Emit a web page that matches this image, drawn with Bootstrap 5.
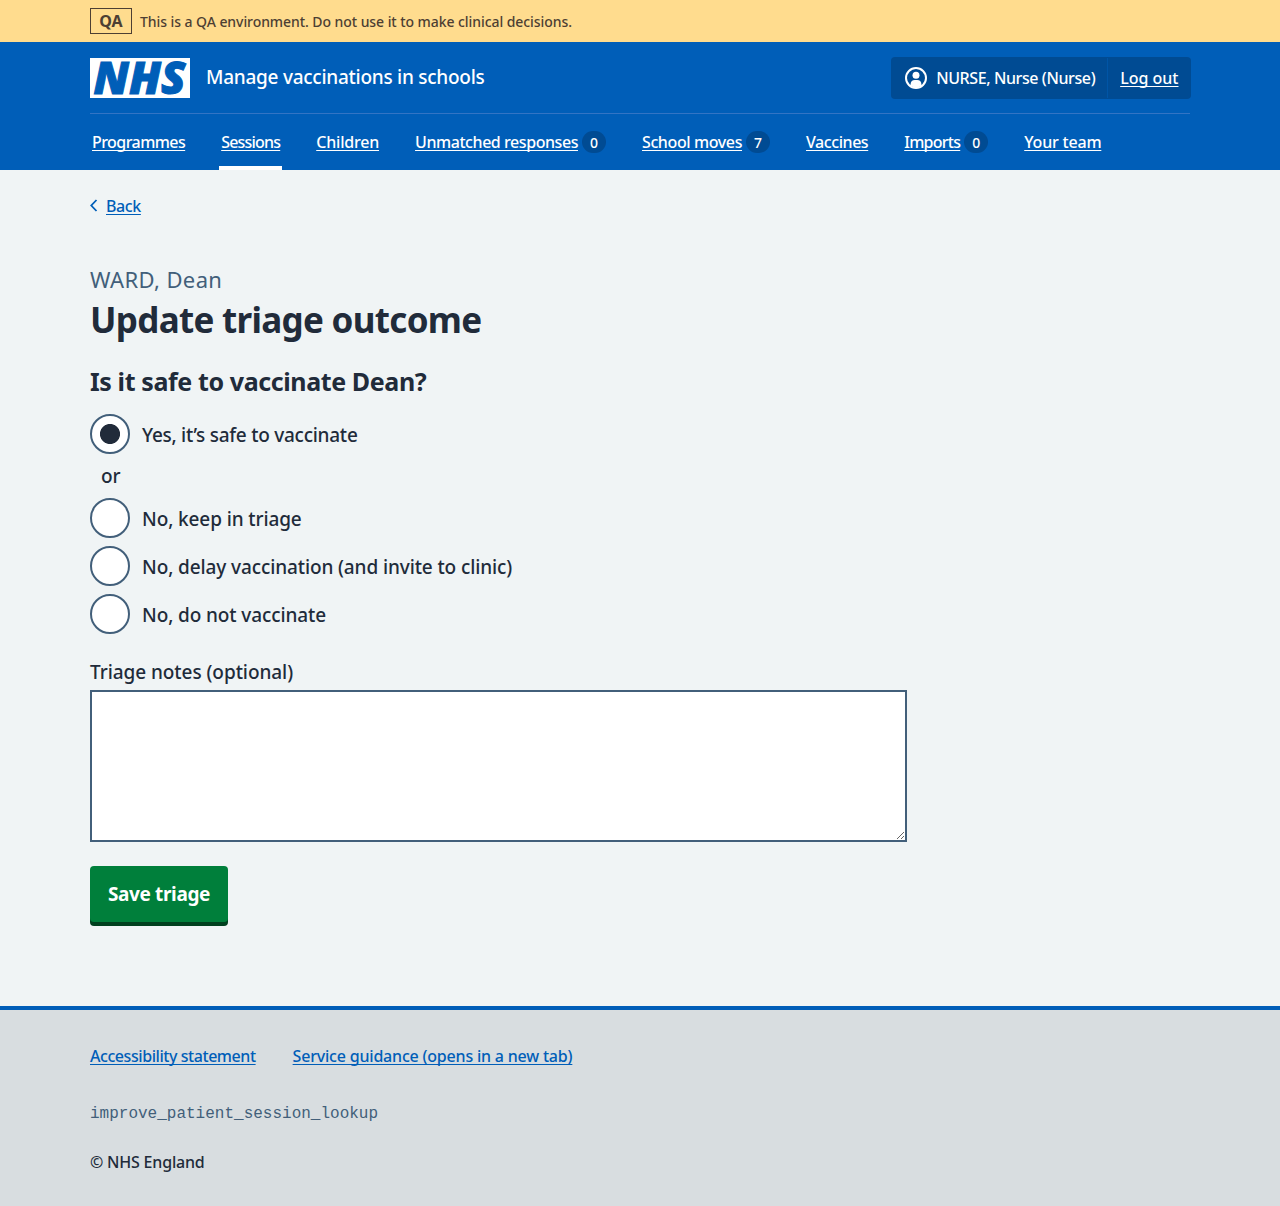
<!DOCTYPE html>
<html lang="en">
<head>
<meta charset="utf-8">
<meta name="viewport" content="width=device-width, initial-scale=1">
<title>Update triage outcome – Manage vaccinations in schools</title>
<link href="https://cdn.jsdelivr.net/npm/bootstrap@5.3.0/dist/css/bootstrap.min.css" rel="stylesheet">
<script src="https://cdn.jsdelivr.net/npm/bootstrap@5.3.0/dist/js/bootstrap.bundle.min.js"></script>
<style>
:root { --nhs-blue: #005eb8; --nhs-dark: #004b93; --nhs-ink: #212b3a; --nhs-slate: #425f7a; }
body { font-family: "Noto Sans", "Open Sans", sans-serif; font-weight: 500; font-size: 16px; line-height: 24px; color: var(--nhs-ink); background: #f0f4f5; }
a, a:hover { text-underline-offset: 1.5px; text-decoration-thickness: 1px; text-decoration-skip-ink: none; }
.page-width { width: 1100px; margin: 0 auto; }
.env-bar { height: 42px; background: #ffdc8e; color: #4d3f33; font-size: 14px; letter-spacing: -.066px; }
.env-tag { width: 42px; height: 26px; border: 1px solid #4d3f33; font-size: 16px; font-weight: 700; letter-spacing: 0; line-height: 25px; }
.env-text { padding-top: 2px; }
.site-header { height: 128px; background: var(--nhs-blue); color: #fff; }
.site-header a { color: #fff; }
.header-top { height: 72px; border-bottom: 1px solid #3374c4; }
.nhs-logo { width: 100px; height: 40px; overflow: visible; }
.service-name { font-size: 19px; letter-spacing: -.26px; line-height: 28px; padding-bottom: 1px; }
.account { height: 42px; background: var(--nhs-dark); border-radius: 4px; margin-right: -1px; }
.account-name { width: 217px; padding-left: 14px; border-right: 1px solid #0055a6; letter-spacing: -.4px; height: 40px; }
.account-icon { margin-right: 9px; }
.account-out { padding: 0 12.500px 0 12px; }
.main-nav { height: 56px; gap: 32px; }
.main-nav li { padding: 0 2px; height: 56px; border-bottom: 4px solid transparent; padding-top: 4px; }
.main-nav li.current { border-color: #fff; }
.count-pill { width: 24px; height: 22px; border-radius: 11px; background: var(--nhs-dark); font-size: 14px; line-height: 23px; margin-left: 4px; }
.text-link { color: var(--nhs-blue); }
.back-row { padding-top: 24px; height: 94px; }
.patient-name { font-size: 22px; font-weight: 400; line-height: 30px; letter-spacing: .38px; color: var(--nhs-slate); }
.page-title { font-size: 35px; font-weight: 700; line-height: 44px; letter-spacing: -.69px; margin: 4px 0 0; }
.question { font-size: 25px; font-weight: 700; line-height: 32px; letter-spacing: -.39px; margin: 23px 0 17px; }
.choice { height: 40px; gap: 12px; font-size: 19px; letter-spacing: -.11px; margin-bottom: 8px; }
.choice span { padding-top: 2px; }
.choice input { appearance: none; width: 40px; height: 40px; border: 2px solid var(--nhs-slate); border-radius: 50%; background: #fff; margin: 0; flex: none; }
.choice input:checked { background: radial-gradient(circle, var(--nhs-ink) 9.6px, #fff 10.4px); }
.choice-or { font-size: 19px; line-height: 28px; padding-left: 11px; margin-bottom: 8px; }
.notes-label { font-size: 19px; line-height: 28px; letter-spacing: -.06px; margin: 24px 0 4px; }
.notes-box { width: 817px; height: 152px; border: 2px solid var(--nhs-slate); background: #fff; border-radius: 0; }
.save-btn, .save-btn:hover { width: 138px; height: 56px; margin: 24px 0 84px; border: 0; border-radius: 4px; background: #007f3b; box-shadow: 0 4px 0 #00401e; color: #fff; font-weight: 700; font-size: 19px; letter-spacing: -.37px; padding: 0; }
.site-footer { height: 200px; border-top: 4px solid var(--nhs-blue); background: #d8dde0; padding-top: 34px; }
.footer-links { gap: 37px; }
.build-ref { font: 400 16px/24px "Liberation Mono", monospace; color: var(--nhs-slate); margin: 34px 0 24px; }
.ls-yes { letter-spacing: -.26px; } .ls-n80 { letter-spacing: -.8px; } .ls-n74 { letter-spacing: -.74px; }
.ls-n53 { letter-spacing: -.56px; } .ls-n45 { letter-spacing: -.44px; } .ls-n40 { letter-spacing: -.39px; }
.ls-n20 { letter-spacing: -.2px; }
</style>
</head>
<body>
<div class="env-bar">
  <div class="page-width h-100 d-flex align-items-center gap-2">
    <span class="env-tag text-center">QA</span>
    <span class="env-text">This is a QA environment. Do not use it to make clinical decisions.</span>
  </div>
</div>

<header class="site-header">
  <div class="page-width">
    <div class="header-top d-flex align-items-center justify-content-between">
      <div class="d-flex align-items-center gap-3">
        <svg class="nhs-logo" viewBox="0 0 100 40" role="img" aria-label="NHS">
          <rect width="100" height="40" fill="#fff"/>
          <text x="3.500" y="35.5" textLength="92" lengthAdjust="spacingAndGlyphs" font-family="Open Sans, sans-serif" font-size="44" font-weight="800" font-style="italic" fill="#005eb8" stroke="#005eb8" stroke-width="1">NHS</text>
        </svg>
        <span class="service-name">Manage vaccinations in schools</span>
      </div>
      <div class="account d-flex align-items-center">
        <div class="account-name d-flex align-items-center">
          <svg width="22" height="22" viewBox="0 0 22 22" fill="#fff" class="account-icon flex-shrink-0" aria-hidden="true">
            <circle cx="11" cy="11" r="10" fill="none" stroke="#fff" stroke-width="2"/>
            <circle cx="11" cy="8.3" r="3.5"/>
            <path d="M5.600 18.700v-1.500c0-2.600 1.800-4.200 4.200-4.200h2.400c2.400 0 4.200 1.600 4.200 4.200v1.500A9.500 9.500 0 0 1 11 20.500a9.500 9.500 0 0 1-5.400-1.800z"/>
          </svg>
          <span>NURSE, Nurse (Nurse)</span>
        </div>
        <a href="#" class="account-out">Log out</a>
      </div>
    </div>
    <ul class="main-nav list-unstyled d-flex mb-0">
      <li class="d-flex align-items-center"><a href="#" class="ls-n53">Programmes</a></li>
      <li class="d-flex align-items-center current"><a href="#" class="ls-n80">Sessions</a></li>
      <li class="d-flex align-items-center"><a href="#" class="ls-n20">Children</a></li>
      <li class="d-flex align-items-center"><a href="#" class="ls-n45">Unmatched responses</a><span class="count-pill text-center">0</span></li>
      <li class="d-flex align-items-center"><a href="#" class="ls-n40">School moves</a><span class="count-pill text-center">7</span></li>
      <li class="d-flex align-items-center"><a href="#" class="ls-n45">Vaccines</a></li>
      <li class="d-flex align-items-center"><a href="#" class="ls-n74">Imports</a><span class="count-pill text-center">0</span></li>
      <li class="d-flex align-items-center"><a href="#" class="ls-n20">Your team</a></li>
    </ul>
  </div>
</header>

<main class="page-width">
  <div class="back-row d-flex align-items-start">
    <svg width="8" height="24" viewBox="0 0 8 24" fill="none" stroke="#005eb8" stroke-width="1.8" class="me-2" aria-hidden="true"><path d="M6.500 6 1.300 11.500l5.200 5.500"/></svg>
    <a href="#" class="text-link ls-n40">Back</a>
  </div>
  <h1 class="mb-0"><span class="patient-name d-block">WARD, Dean</span><span class="page-title d-block">Update triage outcome</span></h1>
  <form>
    <h2 class="question">Is it safe to vaccinate Dean?</h2>
    <label class="choice d-flex align-items-center"><input type="radio" name="outcome" checked><span class="ls-yes">Yes, it’s safe to vaccinate</span></label>
    <div class="choice-or">or</div>
    <label class="choice d-flex align-items-center"><input type="radio" name="outcome"><span>No, keep in triage</span></label>
    <label class="choice d-flex align-items-center"><input type="radio" name="outcome"><span>No, delay vaccination (and invite to clinic)</span></label>
    <label class="choice d-flex align-items-center"><input type="radio" name="outcome"><span>No, do not vaccinate</span></label>
    <label class="notes-label d-block" for="notes">Triage notes (optional)</label>
    <textarea id="notes" class="notes-box d-block"></textarea>
    <button type="button" class="btn save-btn d-block">Save triage</button>
  </form>
</main>

<footer class="site-footer">
  <div class="page-width">
    <div class="footer-links d-flex">
      <a href="#" class="text-link ls-n45">Accessibility statement</a>
      <a href="#" class="text-link ls-n20">Service guidance (opens in a new tab)</a>
    </div>
    <p class="build-ref">improve_patient_session_lookup</p>
    <p class="ls-n20 mb-0">© NHS England</p>
  </div>
</footer>
</body>
</html>
